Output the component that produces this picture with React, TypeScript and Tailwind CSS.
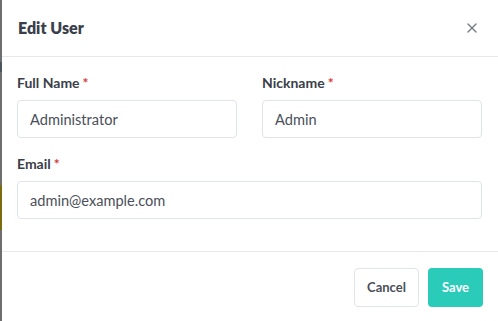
import { X } from "lucide-react";

function Field({ label, value }: { label: string; value: string }) {
  return (
    <div className="flex flex-col">
      <label className="mb-[7px] text-[14px] font-bold leading-[20px] text-[#3a3e49]">
        {label}
        <span className="ml-[3px] text-[#d63939]">*</span>
      </label>
      <input
        readOnly
        value={value}
        className="h-[38px] rounded-[4px] border border-[#dfe3ea] bg-white px-[12px] text-[14.6px] text-[#4a4f5a] outline-none"
      />
    </div>
  );
}

export default function App() {
  return (
    <div
      className="flex h-[321px] w-[498px] overflow-hidden bg-white"
      style={{ fontFamily: "Lato, 'Noto Sans', sans-serif" }}
    >
      <div className="flex w-[2px] flex-col bg-[#6e6e6e]">
        <div className="mt-[62px] h-[10px] bg-[#4a5560]" />
        <div className="mt-[113px] h-[45px] bg-[#7a6a10]" />
      </div>
      <div className="flex flex-1 flex-col">
        <div className="flex h-[57px] items-center justify-between border-b border-[#e6e8ec] pl-[16px] pr-[18px]">
          <h2 className="text-[16px] font-extrabold text-[#3a3f4b]">Edit User</h2>
          <X className="h-[16px] w-[16px] text-[#7a7d84]" strokeWidth={2} />
        </div>
        <div className="flex flex-col gap-[16px] border-b border-[#e6e8ec] pb-[32px] pl-[15px] pr-[16px] pt-[16px]">
          <div className="grid grid-cols-2 gap-[25px]">
            <Field label="Full Name" value="Administrator" />
            <Field label="Nickname" value="Admin" />
          </div>
          <Field label="Email" value="admin@example.com" />
        </div>
        <div className="flex justify-end gap-[9px] pr-[15px] pt-[16px]">
          <button className="h-[39px] w-[65px] rounded-[4px] border border-[#dfe3ea] bg-white text-[13px] font-bold text-[#4a4f5a]">
            Cancel
          </button>
          <button className="h-[39px] w-[55px] rounded-[4px] bg-[#2bcbba] text-[13px] font-bold text-white">
            Save
          </button>
        </div>
      </div>
    </div>
  );
}
